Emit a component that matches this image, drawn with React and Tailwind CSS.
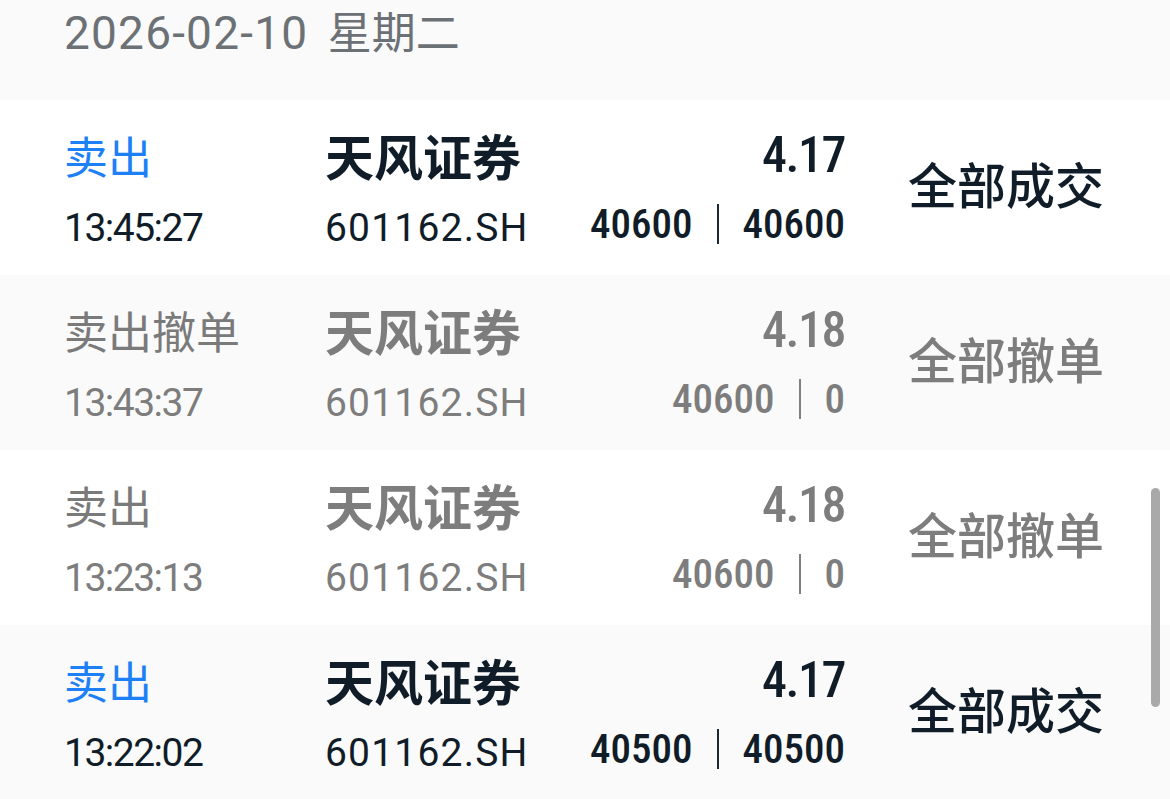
import React from 'react';

const sans = 'font-["Roboto","Noto_Sans_CJK_SC",sans-serif]';
const cjk = 'font-["Noto_Sans_CJK_SC",sans-serif]';
const din = 'font-["Roboto_Condensed","Liberation_Sans_Narrow","Roboto",sans-serif]';

const orders = [
  { side: '卖出', time: '13:45:27', price: '4.17', qty: '40600', done: '40600', status: '全部成交', filled: true, bg: 'bg-white' },
  { side: '卖出撤单', time: '13:43:37', price: '4.18', qty: '40600', done: '0', status: '全部撤单', filled: false, bg: 'bg-[#fafafa]' },
  { side: '卖出', time: '13:23:13', price: '4.18', qty: '40600', done: '0', status: '全部撤单', filled: false, bg: 'bg-white' },
  { side: '卖出', time: '13:22:02', price: '4.17', qty: '40500', done: '40500', status: '全部成交', filled: true, bg: 'bg-[#fafafa]' },
];

function OrderRow({ order }) {
  const { filled } = order;
  const main = filled ? 'text-[#101c28]' : 'text-[#7d7d7d]';
  const sideColor = filled ? 'text-[#1e80f6]' : 'text-[#7a7a7a]';
  const bar = filled ? 'bg-[#1b2733]' : 'bg-[#808080]';

  return (
    <div className={`flex h-[175px] pl-[64px] ${order.bg}`}>
      {/* side + time */}
      <div className="w-[261px] shrink-0 pt-[25px]">
        <div className={`h-[60px] leading-[60px] text-[44px] ${cjk} ${sideColor}`}>{order.side}</div>
        <div className={`mt-[13px] h-[60px] leading-[60px] text-[39px] tracking-[-1.5px] ${sans} ${main}`}>{order.time}</div>
      </div>

      {/* name + code */}
      <div className="w-[260px] shrink-0 pt-[25px]">
        <div className={`h-[60px] leading-[60px] text-[49px] font-bold ${cjk} ${main}`}>天风证券</div>
        <div className={`mt-[13px] h-[60px] leading-[60px] text-[39px] tracking-[1.2px] ${sans} ${main}`}>601162.SH</div>
      </div>

      {/* price + quantities */}
      <div className={`w-[260px] shrink-0 pt-[25px] text-right font-medium ${din} ${main}`}>
        <div className="h-[60px] leading-[60px] text-[50px] tracking-[-1.5px]">{order.price}</div>
        <div className="mt-[9px] flex h-[60px] items-center justify-end text-[41px] leading-[60px]">
          <span>{order.qty}</span>
          <span className={`mx-[24px] h-[40px] w-[2px] shrink-0 ${bar}`} />
          <span>{order.done}</span>
        </div>
      </div>

      {/* status */}
      <div className={`ml-[63px] flex h-[175px] items-center pb-[10px] text-[49px] font-medium ${cjk} ${main}`}>
        {order.status}
      </div>
    </div>
  );
}

export default function App() {
  return (
    <div className="relative h-[799px] w-[1170px] overflow-hidden bg-white">
      <div className={`h-[100px] bg-[#fafafa] pl-[64px] text-[#6c7176] ${sans}`}>
        <div className="h-[66px] leading-[66px] text-[46px]">
          <span className="tracking-[1.2px]">2026-02-10</span> <span className="ml-[8px] text-[44px]">星期二</span>
        </div>
      </div>

      {orders.map((o) => (
        <OrderRow key={o.time} order={o} />
      ))}

      {/* scrollbar */}
      <div className="absolute left-[1151px] top-[488px] h-[219px] w-[9px] rounded-full bg-[#a9a9a9]" />
    </div>
  );
}
